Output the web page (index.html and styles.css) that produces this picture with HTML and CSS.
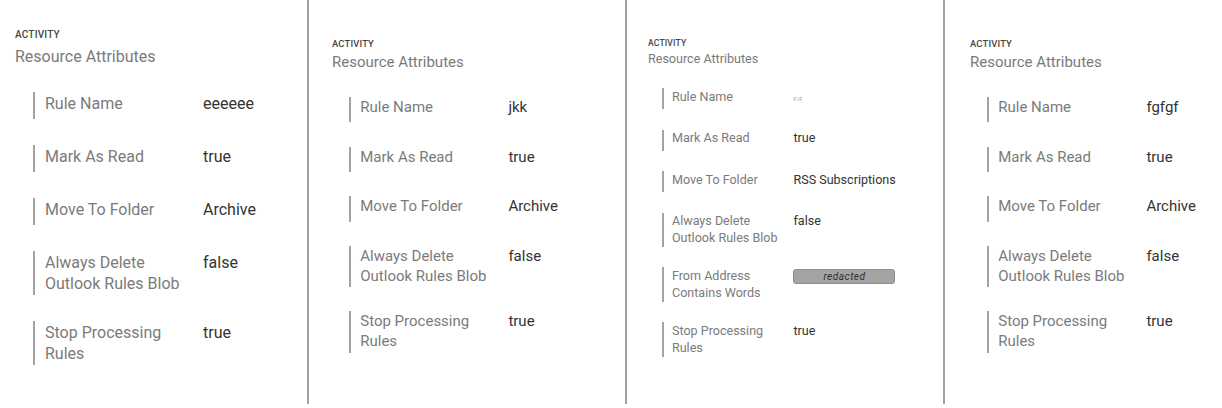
FILE: index.html
```html
<!DOCTYPE html>
<html lang="en">
<head>
<meta charset="utf-8">
<title>Resource Attributes</title>
<link rel="stylesheet" href="styles.css">
</head>
<body>
<div class="board">
  <section class="panel panel-1">
    <div class="eyebrow">ACTIVITY</div>
    <div class="title">Resource Attributes</div>
    <dl class="attrs">
      <div class="attr"><dt>Rule Name</dt><dd>eeeeee</dd></div>
      <div class="attr"><dt>Mark As Read</dt><dd>true</dd></div>
      <div class="attr"><dt>Move To Folder</dt><dd>Archive</dd></div>
      <div class="attr"><dt>Always Delete Outlook Rules Blob</dt><dd>false</dd></div>
      <div class="attr"><dt>Stop Processing Rules</dt><dd>true</dd></div>
    </dl>
  </section>
  <section class="panel panel-2">
    <div class="eyebrow">ACTIVITY</div>
    <div class="title">Resource Attributes</div>
    <dl class="attrs">
      <div class="attr"><dt>Rule Name</dt><dd>jkk</dd></div>
      <div class="attr"><dt>Mark As Read</dt><dd>true</dd></div>
      <div class="attr"><dt>Move To Folder</dt><dd>Archive</dd></div>
      <div class="attr"><dt>Always Delete Outlook Rules Blob</dt><dd>false</dd></div>
      <div class="attr"><dt>Stop Processing Rules</dt><dd>true</dd></div>
    </dl>
  </section>
  <section class="panel panel-3">
    <div class="eyebrow">ACTIVITY</div>
    <div class="title">Resource Attributes</div>
    <dl class="attrs">
      <div class="attr"><dt>Rule Name</dt><dd><span class="stub">FIF</span></dd></div>
      <div class="attr"><dt>Mark As Read</dt><dd>true</dd></div>
      <div class="attr"><dt>Move To Folder</dt><dd>RSS Subscriptions</dd></div>
      <div class="attr"><dt>Always Delete Outlook Rules Blob</dt><dd>false</dd></div>
      <div class="attr"><dt>From Address Contains Words</dt><dd><span class="redacted">redacted</span></dd></div>
      <div class="attr"><dt>Stop Processing Rules</dt><dd>true</dd></div>
    </dl>
  </section>
  <section class="panel panel-4">
    <div class="eyebrow">ACTIVITY</div>
    <div class="title">Resource Attributes</div>
    <dl class="attrs">
      <div class="attr"><dt>Rule Name</dt><dd>fgfgf</dd></div>
      <div class="attr"><dt>Mark As Read</dt><dd>true</dd></div>
      <div class="attr"><dt>Move To Folder</dt><dd>Archive</dd></div>
      <div class="attr"><dt>Always Delete Outlook Rules Blob</dt><dd>false</dd></div>
      <div class="attr"><dt>Stop Processing Rules</dt><dd>true</dd></div>
    </dl>
  </section>
</div>
</body>
</html>
```
FILE: styles.css
```css
html, body {
  margin: 0;
  padding: 0;
  background: #ffffff;
}

body {
  font-family: Roboto, "Noto Sans", "Liberation Sans", sans-serif;
}

.board {
  display: flex;
  height: 404px;
}

.panel {
  box-sizing: border-box;
  height: 100%;
  border-right: 2px solid #a0a0a0;
}

.panel-1 {
  width: 309px;
  padding: 29.2px 0 0 15px;
  font-size: 16px;
}

.panel-2 {
  width: 318px;
  padding: 37.8px 0 0 23px;
  font-size: 15px;
}

.panel-3 {
  width: 318px;
  padding: 37.5px 0 0 21px;
  font-size: 12.56px;
}

.panel-3 .eyebrow {
  font-size: 0.68em;
}

.panel-3 .attr dt {
  width: 9.05em;
}

.panel-4 {
  flex: 1;
  border-right: none;
  padding: 37.8px 0 0 25px;
  font-size: 15px;
}

.eyebrow {
  font-size: 0.625em;
  line-height: 1.2;
  font-weight: 500;
  color: #454545;
  letter-spacing: 0.02em;
}

.title {
  margin-top: 0.29em;
  line-height: 1.3125;
  color: #7a7a7a;
}

.attrs {
  margin: 1.6em 0 0 1.125em;
  display: flex;
  flex-direction: column;
  gap: 1.62em;
}

.attr {
  display: flex;
  align-items: flex-start;
  border-left: 2px solid #a3a3a3;
}

.attr dt {
  width: 9.25em;
  padding: 0.0625em 0 0.0625em 0.625em;
  line-height: 1.3125;
  color: #7b7b7b;
}

.attr dd {
  box-sizing: border-box;
  margin: 0 0 0 0.625em;
  padding-top: 0.0625em;
  min-height: 1.6875em;
  line-height: 1.3125;
  color: #333333;
}

.stub {
  display: inline-block;
  font-size: 0.45em;
  line-height: 1;
  margin-top: 1.5em;
  color: #9aa0b0;
  letter-spacing: 0.1em;
  vertical-align: top;
}

.redacted {
  display: block;
  box-sizing: border-box;
  margin-top: 0.05em;
  width: 10.15em;
  height: 1.5em;
  font-size: 0.8em;
  line-height: 1.3em;
  text-align: center;
  font-style: italic;
  letter-spacing: 0.05em;
  color: #2e2e2e;
  background: #a4a4a4;
  border: 1px solid #8e8e8e;
  border-radius: 3px;
}
```
